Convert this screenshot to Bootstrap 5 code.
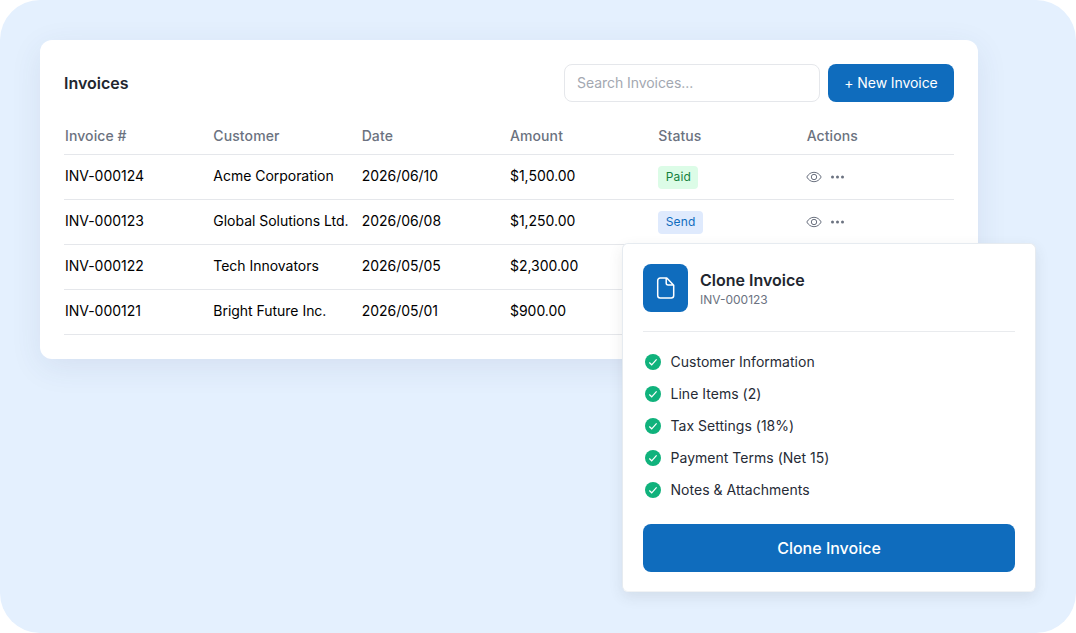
<!DOCTYPE html>
<html lang="en">
<head>
<meta charset="utf-8">
<meta name="viewport" content="width=device-width, initial-scale=1">
<title>Invoices</title>
<link href="https://cdn.jsdelivr.net/npm/bootstrap@5.3.0/dist/css/bootstrap.min.css" rel="stylesheet">
<style>
  body { font-family: Inter, "Liberation Sans", sans-serif; font-size: 14px; line-height: 20px; background: #fff; overflow: hidden; }
  .stage { height: 633px; padding: 40px; background: #e4f0fe; border-radius: 40px; }
  .panel { width: 938px; height: 319px; padding: 24px; border-radius: 12px; box-shadow: 0 8px 32px rgba(50, 70, 110, .09); }
  .panel-title { font-size: 16px; font-weight: 600; line-height: 24px; color: #22262f; }
  .search { width: 256px; height: 38px; padding: 0 12px 2px; font-size: 14px; letter-spacing: -.06px; border-color: #e5e7eb; border-radius: 8px; }
  .search::placeholder { color: #a3a8b1; opacity: 1; }
  .btn-brand { --bs-btn-color: #fff; --bs-btn-bg: #0f6cbd; --bs-btn-hover-color: #fff; --bs-btn-hover-bg: #0c5fa8; --bs-btn-border-width: 0; --bs-btn-border-radius: 8px; }
  .btn-new { width: 126px; height: 38px; padding: 0 0 2px; font-size: 14px; letter-spacing: -.08px; }
  .btn-clone { height: 48px; font-size: 16px; font-weight: 500; }
  .invoices { table-layout: fixed; --bs-table-bg: transparent; color: #000; }
  .invoices th, .invoices td { padding: 0 1px; border-bottom: 1px solid #e5e7eb; white-space: nowrap; }
  .invoices th { height: 36px; padding-top: 1px; font-weight: 500; color: #6b7280; letter-spacing: .1px; vertical-align: middle; }
  .invoices td { height: 45px; padding-bottom: 2px; letter-spacing: -.03px; }
  .invoices td.cell-status { padding: 1px 0 0 1px; }
  .invoices td.cell-actions { padding: 0; }
  .status { display: inline-block; padding: 0 7.500px; height: 23px; line-height: 22px; font-size: 12px; letter-spacing: .1px; border-radius: 4px; vertical-align: middle; }
  .status-paid { background: #dcfce7; color: #15803d; }
  .status-send { background: #dfeafd; color: #0f6cbd; }
  .clone-card { left: 622px; top: 243px; width: 414px; height: 349px; padding: 20px; border: 1px solid #e6ebf0; border-bottom-color: #f1f3f5; border-radius: 6px; box-shadow: 0 5px 14px rgba(60, 60, 60, .1); }
  .doc-tile { width: 45px; height: 48px; border-radius: 8px; background: #0f6cbd; }
  .clone-head { padding-bottom: 19px; border-bottom: 1px solid #e9ebee; }
  .clone-sub { font-size: 12px; line-height: 16px; color: #6b7280; }
  .checks { padding: 20px 0 0 2px; color: #262b36; letter-spacing: .02px; gap: 12px; }
  .checks span { padding-left: 1.500px; }
</style>
</head>
<body>
<main class="stage position-relative">
  <section class="panel bg-white">
    <div class="d-flex align-items-center mb-3">
      <h1 class="panel-title mb-0 me-auto">Invoices</h1>
      <input class="form-control search me-2" type="text" placeholder="Search Invoices..." aria-label="Search invoices">
      <button class="btn btn-brand btn-new" type="button">+ New Invoice</button>
    </div>
    <table class="table invoices align-middle mb-0">
      <thead>
        <tr><th>Invoice #</th><th>Customer</th><th>Date</th><th>Amount</th><th>Status</th><th>Actions</th></tr>
      </thead>
      <tbody>
        <tr>
          <td>INV-000124</td><td>Acme Corporation</td><td>2026/06/10</td><td>$1,500.00</td>
          <td class="cell-status"><span class="status status-paid">Paid</span></td>
          <td class="cell-actions"><div class="d-flex align-items-center gap-2"><svg width="16" height="16" viewBox="0 0 16 16" fill="none" stroke="#6b7280"><path d="M.8 8C2.5 5 5 3.3 8 3.3S13.500 5 15.200 8C13.500 11 11 12.700 8 12.700S2.500 11 .8 8Z"/><circle cx="8" cy="8" r="2.700"/></svg><svg width="16" height="16" viewBox="0 0 16 16" fill="#6b7280"><circle cx="2.500" cy="8" r="1.500"/><circle cx="7.500" cy="8" r="1.500"/><circle cx="12.500" cy="8" r="1.500"/></svg></div></td>
        </tr>
        <tr>
          <td>INV-000123</td><td>Global Solutions Ltd.</td><td>2026/06/08</td><td>$1,250.00</td>
          <td class="cell-status"><span class="status status-send">Send</span></td>
          <td class="cell-actions"><div class="d-flex align-items-center gap-2"><svg width="16" height="16" viewBox="0 0 16 16" fill="none" stroke="#6b7280"><path d="M.8 8C2.5 5 5 3.3 8 3.3S13.500 5 15.200 8C13.500 11 11 12.700 8 12.700S2.500 11 .8 8Z"/><circle cx="8" cy="8" r="2.700"/></svg><svg width="16" height="16" viewBox="0 0 16 16" fill="#6b7280"><circle cx="2.500" cy="8" r="1.500"/><circle cx="7.500" cy="8" r="1.500"/><circle cx="12.500" cy="8" r="1.500"/></svg></div></td>
        </tr>
        <tr><td>INV-000122</td><td>Tech Innovators</td><td>2026/05/05</td><td>$2,300.00</td><td></td><td></td></tr>
        <tr><td>INV-000121</td><td>Bright Future Inc.</td><td>2026/05/01</td><td>$900.00</td><td></td><td></td></tr>
      </tbody>
    </table>
  </section>

  <!-- Clone dialog floating over the invoice list -->
  <section class="clone-card position-absolute bg-white">
    <div class="clone-head d-flex align-items-center">
      <div class="doc-tile d-flex align-items-center justify-content-center">
        <svg width="24" height="24" viewBox="0 0 24 24" fill="none" stroke="#fff" stroke-width="1.500" stroke-linejoin="round"><path d="M12.800 2H6.200A2.500 2.500 0 0 0 3.700 4.500V19.500A2.500 2.500 0 0 0 6.200 22H17.200A2.500 2.500 0 0 0 19.700 19.500V9.200ZM12.200 2V7A2 2 0 0 0 14.200 9H19.700"/></svg>
      </div>
      <div class="ms-2 ps-1">
        <h2 class="panel-title mb-0">Clone Invoice</h2>
        <div class="clone-sub">INV-000123</div>
      </div>
    </div>
    <ul class="checks list-unstyled d-flex flex-column mb-0">
      <li class="d-flex align-items-center"><svg class="me-2" width="16" height="16" viewBox="0 0 16 16"><circle cx="8" cy="8" r="8" fill="#10b27c"/><path d="M4.300 8.500 6.700 10.800 11.600 5.300" fill="none" stroke="#fff" stroke-width="1.200"/></svg><span>Customer Information</span></li>
      <li class="d-flex align-items-center"><svg class="me-2" width="16" height="16" viewBox="0 0 16 16"><circle cx="8" cy="8" r="8" fill="#10b27c"/><path d="M4.300 8.500 6.700 10.800 11.600 5.300" fill="none" stroke="#fff" stroke-width="1.200"/></svg><span>Line Items (2)</span></li>
      <li class="d-flex align-items-center"><svg class="me-2" width="16" height="16" viewBox="0 0 16 16"><circle cx="8" cy="8" r="8" fill="#10b27c"/><path d="M4.300 8.500 6.700 10.800 11.600 5.300" fill="none" stroke="#fff" stroke-width="1.200"/></svg><span>Tax Settings (18%)</span></li>
      <li class="d-flex align-items-center"><svg class="me-2" width="16" height="16" viewBox="0 0 16 16"><circle cx="8" cy="8" r="8" fill="#10b27c"/><path d="M4.300 8.500 6.700 10.800 11.600 5.300" fill="none" stroke="#fff" stroke-width="1.200"/></svg><span>Payment Terms (Net 15)</span></li>
      <li class="d-flex align-items-center"><svg class="me-2" width="16" height="16" viewBox="0 0 16 16"><circle cx="8" cy="8" r="8" fill="#10b27c"/><path d="M4.300 8.500 6.700 10.800 11.600 5.300" fill="none" stroke="#fff" stroke-width="1.200"/></svg><span>Notes &amp; Attachments</span></li>
    </ul>
    <button class="btn btn-brand btn-clone w-100 mt-4" type="button">Clone Invoice</button>
  </section>
</main>
<script src="https://cdn.jsdelivr.net/npm/bootstrap@5.3.0/dist/js/bootstrap.bundle.min.js"></script>
</body>
</html>
